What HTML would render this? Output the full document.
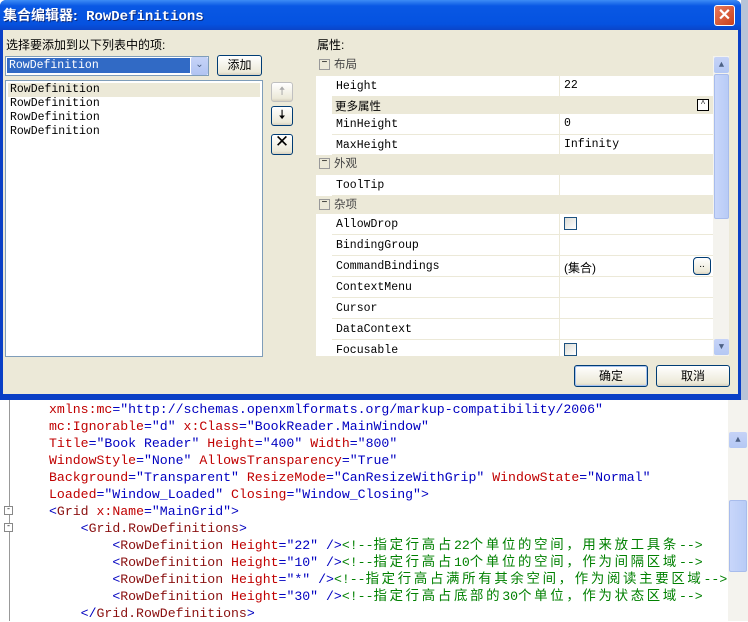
<!DOCTYPE html>
<html><head><meta charset="utf-8">
<style>
*{margin:0;padding:0;box-sizing:border-box}
body{width:748px;height:621px;overflow:hidden;background:#fff;position:relative;font-family:"Liberation Mono","Noto Sans CJK SC",monospace}
.a{position:absolute}
.cjk{font-family:"Liberation Sans","Noto Sans CJK SC",sans-serif}
#dlg{left:0;top:0;width:741px;height:400px;background:#0a3fc6;border-radius:6px 6px 0 0}
#title{left:0;top:0;width:741px;height:30px;background:linear-gradient(#3d8cf5,#0958e4 20%,#0552e0 80%,#0a44c8);border-radius:6px 6px 0 0;color:#fff;font-weight:bold;font-size:14px;line-height:30px;padding-left:3px;text-shadow:1px 1px #0a2a80}
#body{left:3px;top:30px;width:735px;height:364px;background:#ece9d8}
.lab{font-size:12px;color:#000}
.pg{left:316px;top:56px;width:413px;height:300px;background:#fff;overflow:hidden}
.row{position:absolute;left:0;width:397px;font-size:11.5px;font-family:"Liberation Mono","Noto Sans CJK SC",monospace}
.cat{background:#ece9d8;left:0}
.prop{left:16px;width:381px;background:#fff;border-bottom:1px solid #ece9d8}
.prop .n{position:absolute;left:4px;top:4px}
.prop .v{position:absolute;left:227px;top:0;bottom:0;border-left:1px solid #ece9d8;padding:3px 4px}
.box{display:inline-block;width:11px;height:11px;border:1px solid #999;margin:0 6px;vertical-align:middle}
.chk{position:absolute;width:13px;height:13px;border:1px solid #1c5180;background:linear-gradient(135deg,#dcdcd6,#fff)}
.btn{position:absolute;border:1px solid #003c74;border-radius:3px;background:linear-gradient(#fff,#ece9d8 85%,#d6d0c0);font-size:12px;text-align:center}
.code{font-size:13.2px;white-space:normal}
.code div{height:17px;line-height:17px;overflow:visible;white-space:pre}
.r{color:#c00000}.b{color:#0000c0}.g{color:#008000}.k{color:#8a1010}
.c{font-family:"Noto Sans CJK SC",sans-serif;letter-spacing:2.7px;font-size:13.4px;line-height:10px}
</style></head><body>
<div class="a" style="left:741px;top:0;width:7px;height:400px;background:#b8c4d8"></div>
<div class="a" id="dlg"></div>
<div class="a" id="title"><span class="cjk">集合编辑器:</span> RowDefinitions</div>
<div class="a" style="left:714px;top:5px;width:21px;height:21px;border:1px solid #fff;border-radius:3px;background:linear-gradient(135deg,#e87a5c,#c8401c);color:#fff;font:bold 16px/19px 'Liberation Sans';text-align:center">✕</div>
<div class="a" id="body"></div>
<div class="a lab cjk" style="left:6px;top:36px">选择要添加到以下列表中的项:</div>
<div class="a lab cjk" style="left:317px;top:36px">属性:</div>
<div class="a" style="left:5px;top:56px;width:204px;height:20px;border:1px solid #7f9db9;background:#fff"></div>
<div class="a" style="left:7px;top:58px;width:183px;height:15px;background:#316ac5;color:#fff;font-size:11.5px;line-height:15px;padding-left:2px;outline:1px dotted #fff">RowDefinition</div>
<div class="a" style="left:191px;top:57px;width:17px;height:18px;background:linear-gradient(#c6d3f7,#b1c4f2);border-radius:2px;color:#4d6185;font-size:10px;text-align:center;line-height:18px">⌄</div>
<div class="btn cjk" style="left:217px;top:55px;width:45px;height:21px;line-height:19px">添加</div>
<div class="a" style="left:5px;top:80px;width:258px;height:277px;border:1px solid #7f9db9;background:#fff;font-size:11.5px;line-height:14px;padding:2px 2px">
<div style="background:#ece9d8;padding-left:2px">RowDefinition</div><div style="padding-left:2px">RowDefinition</div><div style="padding-left:2px">RowDefinition</div><div style="padding-left:2px">RowDefinition</div></div>
<div class="btn" style="left:271px;top:82px;width:22px;height:20px;border-color:#c0c0c0;color:#aaa;line-height:18px">🠅</div>
<div class="btn" style="left:271px;top:106px;width:22px;height:20px;line-height:18px;font-size:13px">🠇</div>
<div class="btn" style="left:271px;top:134px;width:22px;height:21px;line-height:18px;font-size:17px">✕</div>
<div class="a pg">
 <div class="row cat cjk" style="top:0;height:20px"><span class="box" style="margin:0 4px 0 3px;text-align:center;font-size:10px;line-height:8px">−</span><span style="color:#444">布局</span></div>
 <div class="row prop" style="top:20px;height:21px"><span class="n">Height</span><span class="v">22</span></div>
 <div class="row cat cjk" style="top:41px;height:17px;left:16px;width:381px"><span style="position:absolute;left:3px;top:1px">更多属性</span><span style="position:absolute;right:4px;top:2px;width:12px;height:12px;border:1px solid #000;background:#fff;font-size:8px;line-height:10px;text-align:center">^</span></div>
 <div class="row prop" style="top:58px;height:21px"><span class="n">MinHeight</span><span class="v">0</span></div>
 <div class="row prop" style="top:79px;height:20px"><span class="n">MaxHeight</span><span class="v">Infinity</span></div>
 <div class="row cat cjk" style="top:99px;height:20px"><span class="box" style="margin:0 4px 0 3px;font-size:10px;line-height:8px;text-align:center">−</span><span style="color:#444">外观</span></div>
 <div class="row prop" style="top:119px;height:21px"><span class="n">ToolTip</span><span class="v"></span></div>
 <div class="row cat cjk" style="top:140px;height:18px"><span class="box" style="margin:0 4px 0 3px;font-size:10px;line-height:8px;text-align:center">−</span><span style="color:#444">杂项</span></div>
 <div class="row prop" style="top:158px;height:21px"><span class="n">AllowDrop</span><span class="v"><span class="chk" style="left:4px;top:3px"></span></span></div>
 <div class="row prop" style="top:179px;height:21px"><span class="n">BindingGroup</span><span class="v"></span></div>
 <div class="row prop" style="top:200px;height:21px"><span class="n">CommandBindings</span><span class="v cjk" style="font-size:12px;width:154px">(集合)<span class="btn" style="right:2px;top:1px;width:18px;height:18px;line-height:14px;font-size:10px;border-radius:4px">..</span></span></div>
 <div class="row prop" style="top:221px;height:21px"><span class="n">ContextMenu</span><span class="v"></span></div>
 <div class="row prop" style="top:242px;height:21px"><span class="n">Cursor</span><span class="v"></span></div>
 <div class="row prop" style="top:263px;height:21px"><span class="n">DataContext</span><span class="v"></span></div>
 <div class="row prop" style="top:284px;height:21px"><span class="n">Focusable</span><span class="v"><span class="chk" style="left:4px;top:3px"></span></span></div>
 <div class="a" style="left:397px;top:0;width:16px;height:300px;background:#f4f3ee"></div>
 <div class="a" style="left:398px;top:1px;width:15px;height:16px;background:linear-gradient(#c6d3f7,#b4c8f4);border-radius:2px;font-size:9px;color:#4d6185;text-align:center;line-height:16px">▲</div>
 <div class="a" style="left:398px;top:18px;width:15px;height:145px;background:linear-gradient(90deg,#c8d6fa,#b8cbf6);border:1px solid #a8bcec;border-radius:2px"></div>
 <div class="a" style="left:398px;top:283px;width:15px;height:16px;background:linear-gradient(#c6d3f7,#b4c8f4);border-radius:2px;font-size:9px;color:#4d6185;text-align:center;line-height:16px">▼</div>
</div>
<div class="btn cjk" style="left:574px;top:365px;width:74px;height:22px;line-height:20px;border-color:#003c74;box-shadow:inset 0 0 0 1px #a6c2ee">确定</div>
<div class="btn cjk" style="left:656px;top:365px;width:74px;height:22px;line-height:20px">取消</div>
<div class="a" style="left:0;top:394px;width:741px;height:5px;background:#0a3fc6"></div>
<!-- editor -->
<div class="a" style="left:0;top:400px;width:728px;height:221px;background:#fff"></div>
<div class="a" style="left:9px;top:400px;width:1px;height:221px;background:#999"></div>
<div class="a" style="left:4px;top:506px;width:9px;height:9px;border:1px solid #888;background:#fff;font-size:8px;line-height:6px;text-align:center">-</div>
<div class="a" style="left:4px;top:523px;width:9px;height:9px;border:1px solid #888;background:#fff;font-size:8px;line-height:6px;text-align:center">-</div>
<div class="a code" style="left:49px;top:401px"><div><span class="r">xmlns:mc</span><span class="b">="http://schemas.openxmlformats.org/markup-compatibility/2006"</span></div><div><span class="r">mc:Ignorable</span><span class="b">="d"</span> <span class="r">x:Class</span><span class="b">="BookReader.MainWindow"</span></div><div><span class="r">Title</span><span class="b">="Book Reader"</span> <span class="r">Height</span><span class="b">="400"</span> <span class="r">Width</span><span class="b">="800"</span></div><div><span class="r">WindowStyle</span><span class="b">="None"</span> <span class="r">AllowsTransparency</span><span class="b">="True"</span></div><div><span class="r">Background</span><span class="b">="Transparent"</span> <span class="r">ResizeMode</span><span class="b">="CanResizeWithGrip"</span> <span class="r">WindowState</span><span class="b">="Normal"</span></div><div><span class="r">Loaded</span><span class="b">="Window_Loaded"</span> <span class="r">Closing</span><span class="b">="Window_Closing"</span><span class="b">&gt;</span></div><div><span class="b">&lt;</span><span class="k">Grid</span> <span class="r">x:Name</span><span class="b">="MainGrid"&gt;</span></div><div>    <span class="b">&lt;</span><span class="k">Grid.RowDefinitions</span><span class="b">&gt;</span></div><div>        <span class="b">&lt;</span><span class="k">RowDefinition</span> <span class="r">Height</span><span class="b">="22" /&gt;</span><span class="g">&lt;!--<span class="c">指定行高占</span>22<span class="c">个单位的空间，用来放工具条</span>--&gt;</span></div><div>        <span class="b">&lt;</span><span class="k">RowDefinition</span> <span class="r">Height</span><span class="b">="10" /&gt;</span><span class="g">&lt;!--<span class="c">指定行高占</span>10<span class="c">个单位的空间，作为间隔区域</span>--&gt;</span></div><div>        <span class="b">&lt;</span><span class="k">RowDefinition</span> <span class="r">Height</span><span class="b">="*" /&gt;</span><span class="g">&lt;!--<span class="c">指定行高占满所有其余空间，作为阅读主要区域</span>--&gt;</span></div><div>        <span class="b">&lt;</span><span class="k">RowDefinition</span> <span class="r">Height</span><span class="b">="30" /&gt;</span><span class="g">&lt;!--<span class="c">指定行高占底部的</span>30<span class="c">个单位，作为状态区域</span>--&gt;</span></div><div>    <span class="b">&lt;/</span><span class="k">Grid.RowDefinitions</span><span class="b">&gt;</span></div></div>
<div class="a" style="left:728px;top:400px;width:20px;height:221px;background:#f4f3ee"></div>
<div class="a" style="left:729px;top:432px;width:18px;height:16px;background:linear-gradient(#c6d3f7,#b4c8f4);border-radius:2px;font-size:9px;color:#4d6185;text-align:center;line-height:16px">▲</div>
<div class="a" style="left:729px;top:500px;width:18px;height:72px;background:linear-gradient(90deg,#c8d6fa,#b8cbf6);border:1px solid #a8bcec;border-radius:2px"></div>
</body></html>
